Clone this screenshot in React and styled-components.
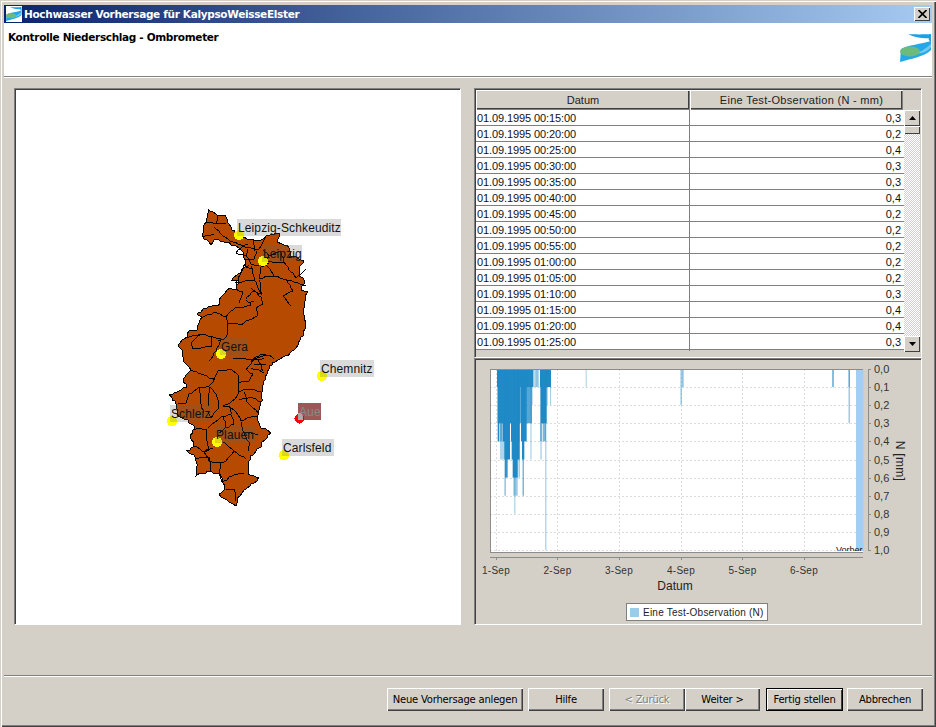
import React from 'react';
import styled, { createGlobalStyle } from 'styled-components';

const Global = createGlobalStyle`
  html, body { margin: 0; padding: 0; background: #d4d0c8; }
`;
const UI = '"DejaVu Sans", sans-serif';
const SANS = '"Liberation Sans", Arial, sans-serif';

const Win = styled.div`
  box-sizing: border-box; width: 936px; height: 727px; padding: 5px 4px 2px;
  display: flex; flex-direction: column; background: #d4d0c8; overflow: hidden;
  box-shadow: inset 1px 1px 0 #d4d0c8, inset 2px 2px 0 #fff, inset -1px -1px 0 #404040, inset -2px -2px 0 #808080;
`;
const TitleBar = styled.div`
  height: 18px; flex: none; display: flex; align-items: center; padding: 0 2px;
  background: linear-gradient(90deg, #0a246a, #a6caf0);
`;
const TitleText = styled.span`
  margin-left: 2px; flex: 1; color: #fff; font: bold 10.5px ${UI}; letter-spacing: -0.32px; white-space: nowrap;
`;
const CloseBtn = styled.div`
  width: 16px; height: 14px; box-sizing: border-box; background: #d4d0c8; display: flex; align-items: center; justify-content: center;
  box-shadow: inset 1px 1px 0 #fff, inset -1px -1px 0 #404040;
`;
const Header = styled.div`
  height: 53px; flex: none; background: #fff; border-bottom: 1px solid #808080; box-shadow: 0 1px 0 #fff;
  display: flex; justify-content: space-between; position: relative;
`;
const Heading = styled.h1`
  margin: 8px 0 0 4px; font: bold 10.5px ${UI}; letter-spacing: -0.34px; color: #000;
`;
const LogoWrap = styled.div`margin-top: 10px;`;
const Main = styled.div`
  height: 598px; flex: none; box-sizing: border-box; padding: 11px 0 0 10px;
  display: grid; grid-template-columns: 447px 448px; grid-template-rows: 537px; column-gap: 13px;
`;
const Sunken = styled.div`
  box-sizing: border-box; border: 1px solid; border-color: #808080 #fff #fff #808080;
  box-shadow: inset 1px 1px 0 #404040; padding: 1px 0 0 1px; min-height: 0; position: relative;
`;
const MapPanel = styled(Sunken)`background: #fff; overflow: hidden;`;
const RightCol = styled.div`display: flex; flex-direction: column;`;
const TablePanel = styled(Sunken)`height: 270px; flex: none;`;
const ChartPanel = styled(Sunken)`height: 267px; flex: none; display: flex; flex-direction: column; align-items: center; padding: 0 0 0 1px;`;
const THead = styled.div`display: flex; height: 20px;`;
const TH = styled.div`
  box-sizing: border-box; width: ${p => p.$w}px; height: 20px; display: flex; align-items: center; justify-content: center;
  padding-left: ${p => p.$pl || 0}px;
  font: 11px ${SANS}; letter-spacing: ${p => p.$ls || 0}px; color: #222; background: #d4d0c8;
  box-shadow: inset 1px 1px 0 #fff, inset -1px -1px 0 #808080, inset -2px -2px 0 #404040;
`;
const TBodyWrap = styled.div`display: flex; align-items: flex-start;`;
const Rows = styled.div`width: 428px; background: #fff; flex: none;`;
const Row = styled.div`
  display: grid; grid-template-columns: 214px 214px; height: 16px; box-sizing: border-box; border-bottom: 1px solid #808080;
  font: 11px/17px ${SANS}; color: #111;
`;
const DateCell = styled.div`padding-left: 1px; border-right: 1px solid #808080; letter-spacing: -0.1px;`;
const ValCell = styled.div`text-align: right; padding-right: 3px;`;
const ScrollBar = styled.div`
  width: 16px; height: 242px; margin-left: 0; display: flex; flex-direction: column;
  background: repeating-conic-gradient(#d4d0c8 0 25%, #fff 0 50%) 0 0 / 2px 2px;
`;
const ScrollBtn = styled.div`
  box-sizing: border-box; width: 16px; height: 16px; background: #d4d0c8; flex: none;
  display: flex; align-items: center; justify-content: center;
  box-shadow: inset 1px 1px 0 #fff, inset -1px -1px 0 #404040;
`;
const Thumb = styled.div`
  box-sizing: border-box; width: 16px; height: 8px; background: #d4d0c8; flex: none;
  box-shadow: inset 1px 1px 0 #fff, inset -1px -1px 0 #404040;
`;
const Track = styled.div`flex: 1;`;
const Legend = styled.div`
  box-sizing: border-box; width: 142px; height: 18px; margin-right: 3px; background: #fff; border: 1px solid #808080;
  display: flex; align-items: center; padding-left: 3px; gap: 4px;
  font: 10px ${SANS}; letter-spacing: 0.23px; color: #222; white-space: nowrap;
`;
const Swatch = styled.span`width: 9px; height: 9px; background: #9ccde8; flex: none;`;
const Footer = styled.div`
  flex: 1; border-top: 1px solid #808080; box-shadow: inset 0 1px 0 #fff;
  display: flex; align-items: flex-start; padding: 12px 9px 0 383px; margin-right: 0;
`;
const Btn = styled.div`
  box-sizing: border-box; width: ${p => p.$w}px; height: 23px; margin-left: ${p => p.$ml || 0}px; flex: none;
  display: flex; align-items: center; justify-content: center; white-space: nowrap;
  font: 10px ${UI}; letter-spacing: -0.02em; background: #d4d0c8; color: ${p => p.$off ? '#808080' : '#000'};
  text-shadow: ${p => p.$off ? '1px 1px 0 #fff' : 'none'};
  box-shadow: ${p => p.$def
    ? 'inset 0 0 0 1px #000, inset 2px 2px 0 #fff, inset -2px -2px 0 #404040'
    : 'inset 1px 1px 0 #fff, inset -1px -1px 0 #404040, inset -2px -2px 0 #808080'};
`;
const MapLabel = styled.div`
  position: absolute; left: ${p => p.$x - 15}px; top: ${p => p.$y - 89}px; width: ${p => p.$w}px; height: 17px; box-sizing: border-box;
  padding-left: 1px; font: 12px/18px ${SANS}; letter-spacing: 0.12px; white-space: nowrap;
  color: ${p => p.$alert ? '#8a8a8a' : '#111'};
  background: ${p => p.$alert ? 'rgba(130,40,40,.78)' : 'rgba(100,100,100,.24)'};
`;
const AlertPip = styled.div`
  position: absolute; left: ${298 - 15}px; top: ${413 - 89}px; width: 5px; height: 7px; background: #aaa; border-top-right-radius: 4px;
`;

const z3 = (x, y) => [150 + x / 3, 200 + y / 3];
const z4 = (x, y) => [150 + x / 3, 350 + y / 3];
const z5 = (x, y) => [225 + x / 3, 235 + y / 3];
const c3 = l => l.map(p => z3(p[0], p[1]));
const c4 = l => l.map(p => z4(p[0], p[1]));
const c5 = l => l.map(p => z5(p[0], p[1]));

// Staircase the polylines so they read as an aliased GIS rendering.
const rough = (pts, amp, closed) => {
  const out = [];
  const n = closed ? pts.length : pts.length - 1;
  for (let i = 0; i < n; i++) {
    const a = pts[i], b = pts[(i + 1) % pts.length];
    const len = Math.hypot(b[0] - a[0], b[1] - a[1]);
    const k = Math.max(1, Math.round(len / 3));
    for (let j = 0; j < k; j++) {
      const t = j / k, s = i * 7.3 + j * 2.1;
      out.push([a[0] + (b[0] - a[0]) * t + amp * Math.sin(s * 1.7), a[1] + (b[1] - a[1]) * t + amp * Math.cos(s * 2.3)]);
    }
  }
  if (!closed) out.push(pts[pts.length - 1]);
  return out.map(p => Math.round(p[0]) + ',' + Math.round(p[1])).join(' ');
};

const outline = [
  ...c3([[170,22],[178,30],[200,42],[222,40],[228,65],[250,90],[262,105],[290,115],[320,118],[360,100],[385,95],[380,125],[410,130],[420,165],[458,178],[445,200],[445,225],[460,240],[450,265],[467,270],[460,310],[458,340],[465,380],[450,410],[435,440],[410,465]]),
  ...c4([[405,15],[380,25],[360,40],[345,70],[335,100],[330,150],[320,195],[325,225],[358,245],[340,270],[315,300],[295,325],[290,370],[325,378],[310,395],[280,420],[260,440],[255,463],[235,455],[205,430],[222,415],[210,370],[170,360],[138,372],[135,320],[108,298],[128,285],[120,255],[130,225],[80,190],[75,160],[55,130],[80,120],[108,110],[95,85],[120,55],[95,30]]),
  ...c3([[95,450],[80,430],[105,410],[115,390],[135,385],[150,350],[135,340],[165,320],[205,310],[208,290],[235,260],[255,265],[260,240],[240,235],[270,215],[285,190],[275,150],[265,140],[235,125],[190,115],[180,130],[155,105],[160,70],[170,45]])
];
const lines3 = [
  [[165,60],[195,70],[225,65]],[[190,75],[215,105],[260,130],[290,130]],[[155,105],[190,100]],[[200,42],[195,70]],
  [[300,260],[330,290],[335,310],[315,320],[320,345],[285,360],[270,370],[230,365],[225,410],[200,420]],
  [[150,350],[190,335],[225,345],[230,365]],[[225,345],[255,320],[280,320],[310,300]],
  [[105,410],[150,400],[180,405],[210,415]],[[120,425],[150,400]],[[120,425],[125,445],[180,435],[180,405]],
  [[210,415],[195,450],[175,480]],[[245,470],[310,475],[330,460],[355,462],[370,475]],[[300,480],[320,465]]
];
const lines5 = [
  [[30,50],[60,60],[75,85],[100,85],[120,75],[175,80],[190,100],[210,125],[240,100]],
  [[120,85],[145,120],[180,130],[200,165]],[[55,70],[85,70],[90,45]],[[60,70],[50,100],[30,140],[85,130],[75,90]],
  [[85,130],[105,175],[80,165],[60,190]],[[130,80],[105,95],[100,130],[120,120],[145,120]],
  [[50,30],[100,40],[110,20],[120,0]],[[30,50],[50,30]],[[80,10],[85,45]],[[180,130],[240,150]],
  [[60,60],[65,40]],[[70,85],[60,95],[80,100]],[[110,40],[130,60],[120,75]],[[130,60],[165,45]],
  [[30,140],[30,160],[50,170],[40,200]],[[60,190],[75,210]],[[175,80],[165,50]],[[100,130],[105,175]],
  [[200,165],[170,180],[195,210]]
];
const lines4 = [
  [[120,55],[150,70],[190,85],[175,105],[145,110],[115,130],[105,155],[80,160]],
  [[190,85],[200,60],[240,55],[262,70],[262,130],[245,150],[215,165]],
  [[262,95],[295,90],[305,70],[285,55]],[[300,30],[340,20]],[[310,40],[345,40]],[[300,50],[340,65]],[[285,55],[310,25],[345,10]],[[320,25],[335,60]],
  [[262,120],[290,115],[330,120]],[[265,145],[300,140],[330,150]],[[280,120],[285,150],[320,185]],
  [[175,105],[195,130],[205,165],[180,200],[170,180]],[[145,110],[150,170],[160,185]],[[175,110],[172,165]],
  [[215,165],[235,165],[240,190],[215,195],[185,220],[170,230]],[[235,165],[255,185],[270,210],[290,200],[320,195]],
  [[270,210],[275,240],[295,275],[290,300]],[[240,190],[250,220],[225,230]],[[215,195],[225,230],[205,245]],
  [[125,232],[165,235],[170,295],[155,300],[130,285]],[[185,290],[160,305],[175,330],[210,335],[225,330],[250,300],[285,325]],
  [[135,320],[175,320],[180,360]],[[210,335],[205,365],[210,395],[250,370],[280,365]],[[225,415],[250,415],[255,450]],
  [[215,270],[235,290],[250,300]],[[275,240],[320,250]]
];
const markers = [[238,234],[262,260],[220,353],[321,375],[171,420],[216,441],[283,454]];
const labels = [
  { t: 'Leipzig-Schkeuditz', x: 237, y: 219, w: 104 },
  { t: 'Leipzig', x: 262, y: 245, w: 40 },
  { t: 'Gera', x: 220, y: 338, w: 28 },
  { t: 'Chemnitz', x: 320, y: 360, w: 54 },
  { t: 'Schleiz', x: 170, y: 405, w: 41 },
  { t: 'Plauen', x: 215, y: 426, w: 41 },
  { t: 'Carlsfeld', x: 282, y: 439, w: 52 },
  { t: 'Aue', x: 298, y: 403, w: 23, alert: true },
];

const MapDrawing = () => (
  <svg width="445" height="534" viewBox="15 89 445 534" style={{ display: 'block' }}>
    <g shapeRendering="crispEdges">
      <polygon points={rough(outline, 0.8, true)} fill="#b54a00" stroke="#000" strokeWidth="1" />
      <g fill="none" stroke="#000" strokeWidth="1">
        {lines3.map((l, i) => <polyline key={i} points={rough(c3(l), 0.5)} />)}
        {lines4.map((l, i) => <polyline key={'b' + i} points={rough(c4(l), 0.5)} />)}
        {lines5.map((l, i) => <polyline key={'c' + i} points={rough(c5(l), 0.4)} />)}
      </g>
      {markers.map((m, i) => <circle key={i} cx={m[0]} cy={m[1]} r="5" fill="#ffff00" />)}
      <circle cx="298.5" cy="417.5" r="5" fill="#ff0000" />
    </g>
  </svg>
);

const rows = ['00:15:00|0,3','00:20:00|0,2','00:25:00|0,4','00:30:00|0,3','00:35:00|0,3','00:40:00|0,4','00:45:00|0,2','00:50:00|0,2','00:55:00|0,2','01:00:00|0,2','01:05:00|0,2','01:10:00|0,3','01:15:00|0,4','01:20:00|0,4','01:25:00|0,3'].map(s => s.split('|'));

const T = 369, STEP = 18.1;
const X = zx => 475 + zx / 3;
const bars = [
  [63,172,1,1],[178,188,1,.5],[192,225,1,1],[172,178,1,.3],
  [65,132,3,1],[132,168,3,.75],[168,170,2,.4],[195,212,3,1],[212,215,2,.5],[222,225,2,.4],
  [65,70,4,1],[72,78,4,.6],[80,102,4,1],[105,130,4,1],[135,152,4,1],[192,198,4,.5],[200,210,4,.6],
  [72,85,5,.35],[85,102,5,1],[107,130,5,1],[138,145,5,1],[163,167,5,.35],[193,197,5,.4],[127,132,5,.4],
  [87,95,6,.9],[110,125,6,1],[127,132,6,.4],[85,90,7,.45],[112,125,7,.45],[140,143,7,.9],[115,118,8,.45],
  [208,211,10,.5],[329,332,1,.4],[613,618,2,.4],[618,623,1,.5]
];
const grid = [495, 556.5, 618, 680, 741.5, 803];
const ticks = ['1-Sep','2-Sep','3-Sep','4-Sep','5-Sep','6-Sep'];

const ChartDrawing = () => (
  <svg width="446" height="244" viewBox="475 359 446 244" style={{ display: 'block', flex: 'none' }}>
    <rect x="489" y="369" width="373" height="183" fill="#fff" />
    <g stroke="#dcdcdc" strokeWidth="1" strokeDasharray="2 2" shapeRendering="crispEdges">
      {Array.from({ length: 10 }, (_, i) => <line key={i} x1="489" x2="862" y1={Math.round(T + STEP * (i + 1))} y2={Math.round(T + STEP * (i + 1))} />)}
      {grid.map(g => <line key={g} x1={g} x2={g} y1="369" y2="552" />)}
    </g>
    <rect x="855" y="369" width="7.5" height="182" fill="#a2cdf5" />
    <g fill="#1f8ac6">
      {bars.map((b, i) => <rect key={i} x={X(b[0])} y={T} width={(b[1] - b[0]) / 3} height={b[2] * STEP} fillOpacity={b[3]} />)}
      <rect x="831" y={T} width="2" height={STEP} fillOpacity=".55" />
      <rect x="847.5" y={T} width="1.5" height={STEP * 3} fillOpacity=".45" />
      <rect x="847.5" y={T} width="1.5" height={STEP} fillOpacity=".5" />
    </g>
    <svg x="820" y="540" width="42" height="11" viewBox="820 540 42 11">
      <text x="835" y="553" fontFamily={SANS} fontSize="9" fill="#111">Vorher</text>
    </svg>
    <g stroke="#8c8c8c" strokeWidth="1" shapeRendering="crispEdges">
      <line x1="489.5" x2="489.5" y1="369" y2="552" />
      <line x1="489" x2="862" y1="369.5" y2="369.5" />
      <line x1="489" x2="862" y1="552.5" y2="552.5" />
      <line x1="489" x2="862" y1="557.5" y2="557.5" />
      <line x1="867.5" x2="867.5" y1="369" y2="551" />
      {grid.map(g => <line key={g} x1={g} x2={g} y1="557" y2="560" />)}
      {Array.from({ length: 11 }, (_, i) => <line key={i} x1="867" x2="870" y1={Math.round(T + STEP * i) + .5} y2={Math.round(T + STEP * i) + .5} />)}
    </g>
    <g fontFamily={SANS} fontSize="10" letterSpacing="0.3" fill="#333">
      {ticks.map((t, i) => <text key={t} x={grid[i]} y="574" textAnchor="middle">{t}</text>)}
    </g>
    <g fontFamily={SANS} fontSize="11" fill="#333">
      {Array.from({ length: 11 }, (_, i) => <text key={i} x="873" y={T + STEP * i + 4}>{(i / 10).toFixed(1).replace('.', ',')}</text>)}
    </g>
    <text x="674" y="590" fontFamily={SANS} fontSize="12" textAnchor="middle" fill="#222">Datum</text>
    <text x="895" y="461" fontFamily={SANS} fontSize="12" letterSpacing="0.3" textAnchor="middle" fill="#222" transform="rotate(90 895 461)">N [mm]</text>
  </svg>
);

const Logo = ({ w, h }) => (
  <svg width={w} height={h} viewBox="0 0 32 30" style={{ display: 'block', background: '#fff' }}>
    <path d="M8 1 C14 1.5 24 1.5 31 1 L31 5 C25 6 15 5 8 1Z" fill="#1aa0e4" />
    <path d="M29 5 L31 5 L31 9 C29 8 28 6 29 5Z" fill="#1aa0e4" />
    <path d="M31 8 C21 11 8 12 1 16 L0 29 C10 26 24 24 31 17 Z" fill="#25a9e6" />
    <path d="M31 11 C25 16 21 19 14 21 C24 21 29 17 31 14Z" fill="#73c8ee" />
    <ellipse cx="10" cy="18.5" rx="10" ry="5" fill="#6dbb7c" />
  </svg>
);

const TriUp = () => <svg width="7" height="4" viewBox="0 0 7 4"><path d="M3.5 0 L7 4 L0 4Z" fill="#000" /></svg>;
const TriDown = () => <svg width="7" height="4" viewBox="0 0 7 4"><path d="M0 0 L7 0 L3.5 4Z" fill="#000" /></svg>;

export default function App() {
  return (
    <Win>
      <Global />
      <TitleBar>
        <Logo w={16} h={16} />
        <TitleText>Hochwasser Vorhersage für KalypsoWeisseElster</TitleText>
        <CloseBtn>
          <svg width="9" height="8" viewBox="0 0 9 8"><path d="M0.5 0 L8.5 8 M8.5 0 L0.5 8" stroke="#000" strokeWidth="1.6" /></svg>
        </CloseBtn>
      </TitleBar>
      <Header>
        <Heading>Kontrolle Niederschlag - Ombrometer</Heading>
        <LogoWrap><Logo w={32} h={30} /></LogoWrap>
      </Header>
      <Main>
        <MapPanel>
          <MapDrawing />
          {labels.map(l => <MapLabel key={l.t} $x={l.x} $y={l.y} $w={l.w} $alert={l.alert}>{l.t}</MapLabel>)}
          <AlertPip />
        </MapPanel>
        <RightCol>
          <TablePanel>
            <THead>
              <TH $w={214}>Datum</TH>
              <TH $w={213} $ls={0.3} $pl={10}>Eine Test-Observation (N - mm)</TH>
            </THead>
            <TBodyWrap>
              <Rows>
                {rows.map(r => (
                  <Row key={r[0]}>
                    <DateCell>01.09.1995 {r[0]}</DateCell>
                    <ValCell>{r[1]}</ValCell>
                  </Row>
                ))}
              </Rows>
              <ScrollBar>
                <ScrollBtn><TriUp /></ScrollBtn>
                <Thumb />
                <Track />
                <ScrollBtn><TriDown /></ScrollBtn>
              </ScrollBar>
            </TBodyWrap>
          </TablePanel>
          <ChartPanel>
            <ChartDrawing />
            <Legend><Swatch />Eine Test-Observation (N)</Legend>
          </ChartPanel>
        </RightCol>
      </Main>
      <Footer>
        <Btn $w={136}>Neue Vorhersage anlegen</Btn>
        <Btn $w={76} $ml={5}>Hilfe</Btn>
        <Btn $w={76} $ml={5} $off>&lt; Zurück</Btn>
        <Btn $w={75}>Weiter &gt;</Btn>
        <Btn $w={77} $ml={6} $def>Fertig stellen</Btn>
        <Btn $w={76} $ml={4}>Abbrechen</Btn>
      </Footer>
    </Win>
  );
}
